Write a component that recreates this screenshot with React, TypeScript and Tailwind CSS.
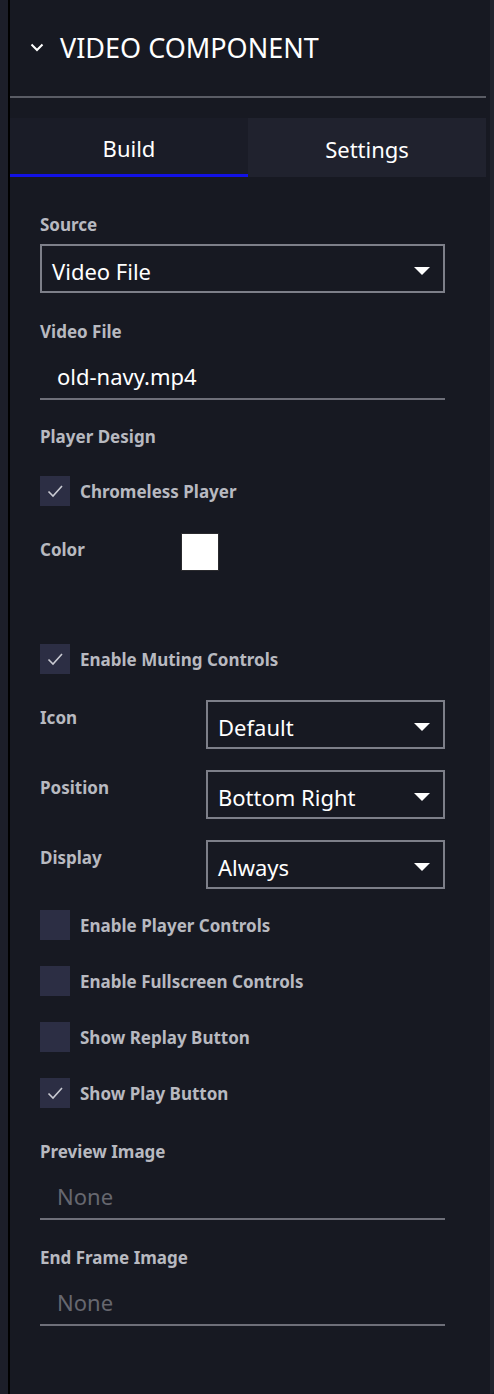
import React from "react";

const font = { fontFamily: '"Noto Sans", "Open Sans", sans-serif' };

function Caret() {
  return (
    <svg width="16" height="8" viewBox="0 0 16 8" className="shrink-0 mt-[4px]">
      <path d="M0 0 H16 L8 8 Z" fill="#ffffff" />
    </svg>
  );
}

function Check() {
  return (
    <svg width="18" height="18" viewBox="0 0 18 18">
      <path d="M2.5 9.5 L7 14 L16 4" fill="none" stroke="#c9cad2" strokeWidth="1.6" />
    </svg>
  );
}

function Label({ text }: { text: string }) {
  return <div className="h-[24px] text-[17px] leading-[24px] font-bold text-[#b8b9c0]">{text}</div>;
}

function Select({ value, className = "" }: { value: string; className?: string }) {
  return (
    <div
      className={`h-[49px] border-2 border-[#7d7f89] flex items-center justify-between pl-[10px] pr-[13px] text-[22px] text-white ${className}`}
    >
      <span className="pt-[5px]">{value}</span>
      <Caret />
    </div>
  );
}

function Checkbox({ text, checked }: { text: string; checked?: boolean }) {
  return (
    <div className="flex items-center gap-[10px] h-[30px]">
      <div className="w-[30px] h-[30px] bg-[#2c2e44] flex items-center justify-center">
        {checked && <Check />}
      </div>
      <span className="text-[17px] font-bold text-[#b8b9c0] pt-[1px]">{text}</span>
    </div>
  );
}

function UnderlineInput({ value, placeholder }: { value?: string; placeholder?: boolean }) {
  return (
    <div
      className={`h-[56px] border-b-2 border-[#6e6f79] pl-[17px] flex items-center pt-[11px] text-[22px] ${
        placeholder ? "text-[#66676f]" : "text-white"
      }`}
    >
      {value}
    </div>
  );
}

function SideSelect({ label, value }: { label: string; value: string }) {
  return (
    <div className="flex items-start">
      <div className="w-[166px] pt-[6px]">
        <Label text={label} />
      </div>
      <Select value={value} className="flex-1" />
    </div>
  );
}

export default function App() {
  return (
    <div className="w-[494px] h-[1394px] bg-[#1c1e29] flex" style={font}>
      <div className="w-[8px] shrink-0" />
      <div className="w-[2px] shrink-0 bg-black" />
      <div className="flex-1 bg-[#171922] flex">
        <div className="w-[476px] flex flex-col">
          {/* header */}
          <div className="h-[96px] flex items-center pl-[20px] gap-[16px] pb-[2px]">
            <svg width="14" height="9" viewBox="0 0 14 9">
              <path d="M1.5 1.5 L7 7 L12.5 1.5" fill="none" stroke="#ffffff" strokeWidth="2" />
            </svg>
            <span className="text-[27px] text-white pt-[2px]">VIDEO COMPONENT</span>
          </div>
          <div className="h-[2px] bg-[#5a5c65]" />

          {/* tabs */}
          <div className="mt-[20px] h-[59px] flex text-[22px] text-white">
            <div className="w-[238px] bg-[#1a1c27] border-b-[3px] border-[#1212e6] flex items-center justify-center pt-[5px]">
              Build
            </div>
            <div className="flex-1 bg-[#20222e] flex items-center justify-center pt-[4px]">Settings</div>
          </div>

          {/* form */}
          <div className="pl-[30px] pr-[41px] flex flex-col">
            <div className="mt-[36px]">
              <Label text="Source" />
            </div>
            <div className="mt-[7px]">
              <Select value="Video File" />
            </div>

            <div className="mt-[27px]">
              <Label text="Video File" />
            </div>
            <UnderlineInput value="old-navy.mp4" />

            <div className="mt-[25px]">
              <Label text="Player Design" />
            </div>
            <div className="mt-[27px]">
              <Checkbox text="Chromeless Player" checked />
            </div>

            <div className="mt-[26px] h-[40px] flex items-center">
              <div className="w-[141px] pb-[4px]">
                <Label text="Color" />
              </div>
              <div className="w-[38px] h-[38px] bg-white border-[1.5px] border-[#2a2a2e]" />
            </div>

            <div className="mt-[72px]">
              <Checkbox text="Enable Muting Controls" checked />
            </div>

            <div className="mt-[26px] flex flex-col gap-[21px]">
              <SideSelect label="Icon" value="Default" />
              <SideSelect label="Position" value="Bottom Right" />
              <SideSelect label="Display" value="Always" />
            </div>

            <div className="mt-[21px] flex flex-col gap-[26px]">
              <Checkbox text="Enable Player Controls" />
              <Checkbox text="Enable Fullscreen Controls" />
              <Checkbox text="Show Replay Button" />
              <Checkbox text="Show Play Button" checked />
            </div>

            <div className="mt-[32px]">
              <Label text="Preview Image" />
            </div>
            <UnderlineInput value="None" placeholder />

            <div className="mt-[26px]">
              <Label text="End Frame Image" />
            </div>
            <UnderlineInput value="None" placeholder />
          </div>
        </div>
        <div className="w-[4px]" />
        <div className="w-[4px] bg-[#21232d] rounded-br-[6px]" />
      </div>
    </div>
  );
}
